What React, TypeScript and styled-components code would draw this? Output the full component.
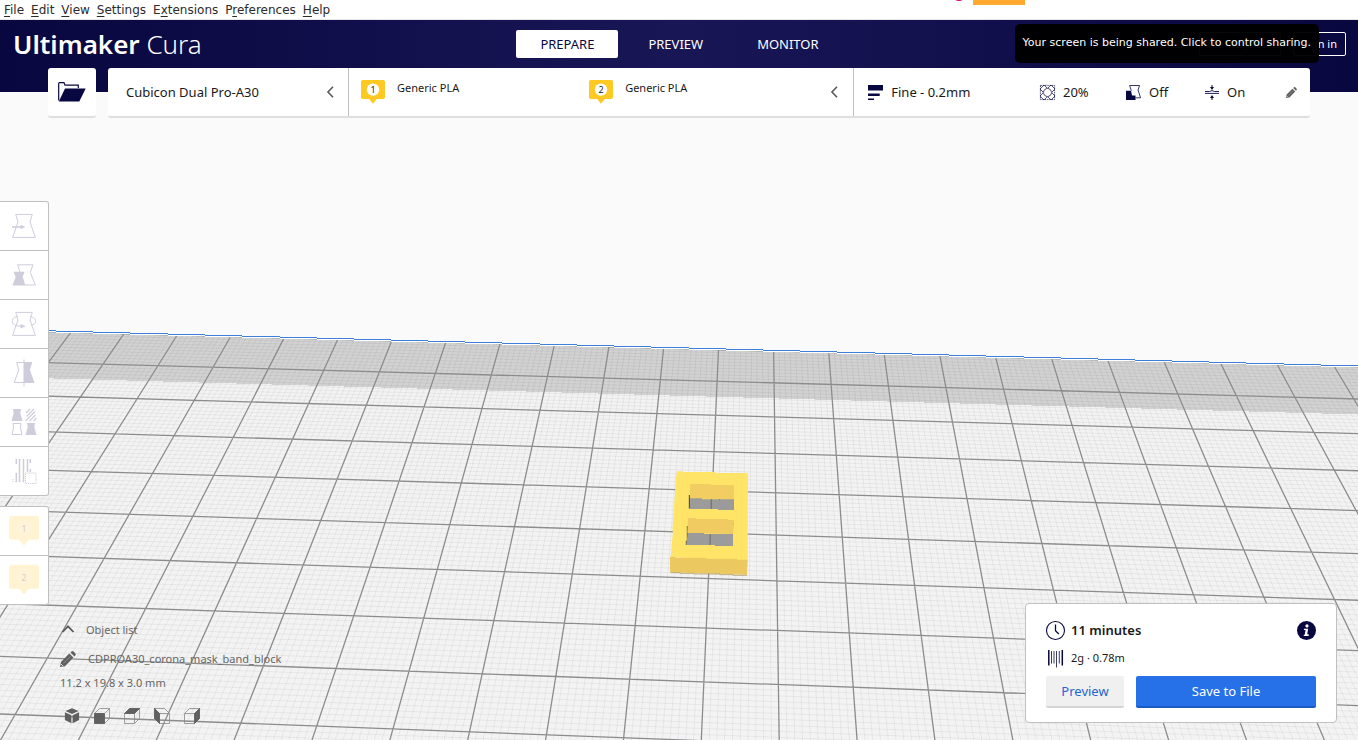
import React from "react";
import styled, { createGlobalStyle } from "styled-components";

const NAVY = "#08073f";

const GlobalStyle = createGlobalStyle`
  *, *::before, *::after { box-sizing: border-box; }
  body {
    margin: 0;
    background: #fafafa;
    color: #191919;
    font-family: "Noto Sans", "Open Sans", sans-serif;
    font-size: 13px;
    line-height: 18px;
  }
  button { font: inherit; color: inherit; border: 0; padding: 0; background: none; cursor: pointer; }
  h1, p { margin: 0; font: inherit; }
  svg { display: block; flex: none; overflow: visible; }
`;

/* ---------- page frame ---------- */

const Window = styled.div`
  position: relative;
  display: grid;
  grid-template: minmax(100vh, auto) / minmax(0, 1fr);
  overflow: hidden;
`;

const SceneSvg = styled.svg`
  grid-area: 1 / 1;
  width: 100%;
  height: 100%;
  overflow: hidden;
`;

const Interface = styled.div`
  grid-area: 1 / 1;
  z-index: 1;
  display: flex;
  flex-direction: column;
`;

const MenuBar = styled.nav`
  display: flex;
  height: 20px;
  padding: 1px 4px 0;
  gap: 7px;
  background: #fff;
  border-bottom: 1px solid #e4e8ec;
  color: #2b2b2b;
  font: 12px/18px "DejaVu Sans", sans-serif;
`;

const MenuButton = styled.button`
  u { text-underline-offset: 2px; }
`;

const Header = styled.header`
  display: grid;
  grid-template-columns: 1fr auto 1fr;
  align-items: center;
  height: 72px;
  padding: 0 12px 24px 13px;
  background: linear-gradient(90deg, ${NAVY}, #191656 50%, ${NAVY});
  color: #fff;
`;

const Brand = styled.h1`
  font-size: 26px;
  line-height: 32px;
  font-weight: 300;
  b { font-weight: 600; }
`;

const Stages = styled.nav`
  display: flex;
  gap: 6px;
`;

const StageTab = styled.button<{ $active?: boolean }>`
  height: 28px;
  padding: 0 24px;
  border-radius: 2px;
  background: ${(p) => (p.$active ? "#fff" : "transparent")};
  color: ${(p) => (p.$active ? NAVY : "#fff")};
`;

const Account = styled.div`
  display: flex;
  justify-content: flex-end;
  gap: 12px;
`;

const OutlineButton = styled.button`
  height: 24px;
  padding: 0 8px;
  border: 1px solid #fff;
  border-radius: 2px;
  font-size: 11px;
`;

/* ---------- toolbar ---------- */

const Toolbar = styled.section`
  display: flex;
  gap: 12px;
  margin: -24px 48px 0;
`;

const OpenButton = styled.button`
  display: grid;
  place-items: center;
  width: 48px;
  height: 50px;
  background: #fff;
  border-bottom: 2px solid #dedede;
  border-radius: 3px;
`;

const Selectors = styled.div`
  flex: 1;
  display: flex;
  height: 50px;
  background: #fff;
  border-bottom: 2px solid #dedede;
  border-radius: 3px;
`;

const MachineButton = styled.button`
  flex: 0 0 240px;
  display: flex;
  align-items: center;
  justify-content: space-between;
  padding: 0 14px 0 18px;
`;

const MaterialButton = styled.button`
  flex: 507;
  display: grid;
  grid-template-columns: 1fr 1fr 36px;
  align-items: center;
  justify-items: start;
  padding: 0 0 0 12px;
  border-left: 1px solid #c0c0c0;
  > svg { margin-left: 14px; }
`;

const Material = styled.span`
  display: flex;
  align-items: center;
  gap: 12px;
  font-size: 11px;
  height: 24px;
`;

const MaterialName = styled.span`
  padding-bottom: 8px;
`;

const SettingsButton = styled.button`
  flex: 455;
  display: grid;
  grid-template-columns: 1fr 86px 79px 81px 24px;
  align-items: center;
  padding-left: 14px;
  border-left: 1px solid #c0c0c0;
`;

const Setting = styled.span`
  display: flex;
  align-items: center;
  gap: 8px;
`;

/* ---------- workspace ---------- */

const Workspace = styled.main`
  flex: 1;
  display: flex;
  justify-content: space-between;
  align-items: stretch;
  gap: 24px;
  padding: 83px 21px 14px 0;
`;

const LeftColumn = styled.div`
  display: flex;
  flex-direction: column;
  justify-content: space-between;
  gap: 14px;
`;

const ToolStack = styled.div`
  display: flex;
  flex-direction: column;
  gap: 10px;
`;

const ToolGroup = styled.div`
  width: 49px;
  background: #fff;
  border: 1px solid #c0c0c0;
  border-left: 0;
  border-radius: 0 3px 3px 0;
`;

const ToolButton = styled.button`
  display: grid;
  place-items: center;
  width: 48px;
  height: 48px;
  & + & { height: 49px; border-top: 1px solid #c0c0c0; }
`;

const ObjectInfo = styled.section`
  padding-left: 60px;
  color: #666;
  font-size: 11px;
  line-height: 18px;
`;

const ObjectToggle = styled.button`
  display: flex;
  align-items: center;
  gap: 10px;
`;

const ObjectRow = styled.button`
  display: flex;
  align-items: center;
  gap: 12px;
  margin: 11px 0 6px;
`;

const ViewButtons = styled.div`
  display: flex;
  gap: 14px;
  padding: 14px 4px 0;
  button { height: 20px; }
`;

const ActionPanel = styled.aside`
  align-self: flex-end;
  width: 312px;
  margin-bottom: 3px;
  padding: 16px 20px 14px;
  background: #fff;
  border: 1px solid #c0c0c0;
  border-radius: 4px;
`;

const PanelRow = styled.div`
  display: flex;
  align-items: center;
  gap: 6px;
  height: 20px;
  margin-bottom: 8px;
  font-size: 11px;
`;

const PrintTime = styled.strong`
  flex: 1;
  font-size: 13px;
  font-weight: 600;
`;

const Actions = styled.div`
  display: flex;
  gap: 12px;
`;

const ActionButton = styled.button<{ $primary?: boolean }>`
  flex: ${(p) => (p.$primary ? "1" : "0 0 78px")};
  height: 32px;
  border-radius: 2px;
  background: ${(p) => (p.$primary ? "#2671e7" : "#f0f0f0")};
  border-bottom: 2px solid ${(p) => (p.$primary ? "#1b5bc4" : "#d4d4d4")};
  color: ${(p) => (p.$primary ? "#fff" : "#1f66d0")};
`;

/* ---------- desktop overlays ---------- */

const ShareTip = styled.div`
  position: absolute;
  z-index: 2;
  top: 24px;
  right: 39px;
  padding: 10px 8px 11px;
  border-radius: 5px;
  background: rgba(0, 0, 0, 0.97);
  color: #fff;
  font: 11px/18px "DejaVu Sans", sans-serif;
`;

const ShareTab = styled.div`
  position: absolute;
  z-index: 2;
  top: 0;
  right: 333px;
  width: 52px;
  height: 5px;
  background: #ffa931;
`;

const RecordDot = styled.div`
  position: absolute;
  z-index: 2;
  top: -13px;
  right: 392px;
  width: 14px;
  height: 14px;
  border-radius: 50%;
  background: #e5006d;
`;

/* ---------- build plate ---------- */

// Perspective projection of plate coordinates (column u, row v) to the view.
const project = (u: number, v: number): [number, number] => {
  const w = 1 - 0.00155 * u - 0.032 * v;
  return [(52.846 * u - 24.32 * v + 71) / w, (0.9015 * u + 18.95 * v + 332.2) / w];
};

const segment = (u1: number, v1: number, u2: number, v2: number) => {
  const [x1, y1] = project(u1, v1);
  const [x2, y2] = project(u2, v2);
  return `M${x1.toFixed(1)} ${y1.toFixed(1)}L${x2.toFixed(1)} ${y2.toFixed(1)}`;
};

const gridPath = (step: number, skip: number) => {
  let d = "";
  for (let i = -4 * step; i <= 26 * step; i++) if (!skip || i % skip) d += segment(i / step, 0, i / step, 14);
  for (let i = 0; i <= 14 * step; i++) if (!skip || i % skip) d += segment(-4, i / step, 26, i / step);
  return d;
};

const MAJOR = gridPath(1, 0);
const MINOR = gridPath(10, 10);

const Scene = () => (
  <SceneSvg viewBox="0 0 1358 740" preserveAspectRatio="xMidYMid slice" aria-hidden="true">
    <path d="M0 330L1358 367V740H0Z" fill="#f3f3f3" shapeRendering="crispEdges" />
    <path d="M0 330L1358 367V414.500L0 377Z" fill="#d2d2d2" shapeRendering="crispEdges" />
    <path d={MINOR} stroke="#000" strokeOpacity="0.05" fill="none" />
    <path d={MAJOR} stroke="#8c8c8f" strokeWidth="1.300" fill="none" />
    <path d="M0 330.500L1358 367" stroke="#fff" fill="none" shapeRendering="crispEdges" />
    <path d="M0 329.500L1358 366" stroke="#3f7fdc" fill="none" shapeRendering="crispEdges" />
    <g transform="translate(640 440) scale(0.333333)">
      <path d="M111 94H129V96H227V99H324L323 362L92 352L99 272H97L108 114Z" fill="#ffe468" />
      <path d="M90 350H106V353H198V356H291V359H323L321 404L90 397Z" fill="#ebc960" />
      <path d="M92 398H120V400H161V402H240V404H279V406H321" fill="none" stroke="#a88f50" strokeWidth="2" />
      <path d="M150 132H213V135H282V179L150 175Z" fill="#f1cd62" />
      <path d="M148 175H186V178H282V210H234V207H148Z" fill="#9b9b9b" />
      <path d="M148 165V205M142 258V299M139 302V315M279 253H282" stroke="#44412e" strokeWidth="3" fill="none" />
      <path d="M144 234H168V237H264V240H282V246L279 282L142 279Z" fill="#efcb61" />
      <path d="M143 279H192V282H279V318H225V315H139Z" fill="#9b9b9b" />
      <path d="M214 178V207M211 282L210 315" stroke="#77777a" strokeWidth="4" />
      <path d="M237 179H240" stroke="#c0392b" strokeWidth="2" />
    </g>
  </SceneSvg>
);

/* ---------- icons ---------- */

const FolderIcon = () => (
  <svg width="28" height="20" viewBox="0 0 28 20">
    <path d="M.7 18.500V1.200L1.500.6H6L7 3.200H20.300V6" fill="none" stroke={NAVY} strokeWidth="1.200" />
    <path d="M7 6.500H27.700L21.300 19.500H.8Z" fill={NAVY} />
  </svg>
);

const ChevronIcon = () => (
  <svg width="7" height="12" viewBox="0 0 7 12">
    <path d="M6 .8L1 6l5 5.200" fill="none" stroke="#5a5a5a" strokeWidth="1.600" />
  </svg>
);

const BadgeIcon = ({ n, muted }: { n: number; muted?: boolean }) => {
  const size = muted ? 30 : 24;
  return (
    <svg width={size} height={size} viewBox="0 0 24 24">
      <path d="M1.200 0H22.800L24 1.200V17.800L22.800 19H15.800L12 23.800L8.200 19H1.200L0 17.800V1.200Z" fill={muted ? "#fff3d2" : "#ffc924"} />
      <circle cx="12" cy="9.600" r="6.200" fill={muted ? "#fff4da" : "#fff"} />
      <text x="12" y={muted ? 12.6 : 13} textAnchor="middle" fontSize={muted ? 7 : 9} fill={muted ? "#d8cfb6" : "#191919"}>{n}</text>
    </svg>
  );
};

const LayerIcon = () => (
  <svg width="15" height="15" viewBox="0 0 15 15" fill={NAVY}>
    <path d="M0 0H15V5.400H0ZM0 8.400H11.700V11H0ZM0 13.500H6V15H0Z" />
  </svg>
);

const InfillIcon = () => (
  <svg width="15" height="15" viewBox="0 0 15 15" fill="none" stroke={NAVY} strokeWidth="0.700">
    <rect x=".4" y=".4" width="14.200" height="14.200" strokeDasharray="1.500 .8" />
    <path d="M0 4L4 0M0 11L11 0M4 15L15 4M11 15L15 11M0 4L11 15M4 0L15 11M11 0L15 4M0 11L4 15" />
    <path d="M4.600 4.600L7.500 3.200L10.400 4.600L11.800 7.500L10.400 10.400L7.500 11.800L4.600 10.400L3.200 7.500Z" fill="#fff" />
  </svg>
);

const SupportIcon = () => (
  <svg width="15" height="15" viewBox="0 0 15 15">
    <path d="M0 5.700H5L6 10.500H9.500V15H0Z" fill={NAVY} />
    <path d="M3.600.5H13.600L12 5L14.600 12.800H9.500M3.600.5L5.300 5.700" fill="none" stroke={NAVY} strokeWidth="0.800" />
  </svg>
);

const AdhesionIcon = () => (
  <svg width="14" height="15" viewBox="0 0 14 15">
    <path d="M0 6.500H4.500L7 5.600L9.500 6.500H14M0 8.400H14" fill="none" stroke={NAVY} strokeWidth="0.900" />
    <path d="M7 0V3M7 12V15" stroke={NAVY} />
    <path d="M5 2H9L7 5ZM5 13H9L7 10Z" fill={NAVY} />
  </svg>
);

const PencilIcon = ({ size }: { size: number }) => (
  <svg width={size} height={size} viewBox="0 0 15 15" fill="#606060">
    <path d="M8.700 2.300L12.600 6.200L4.700 14.200L0 15L.9 10.200ZM9.800 1.300L10.800.4Q11.800-.3 12.700.5L14.500 2.300Q15.200 3.200 14.500 4.100L13.600 5.100Z" />
    <path d="M3.300 11.600L10 4.900" stroke="#aaa" strokeWidth="0.600" />
    <path d="M.9 12.200L2.800 14.200" stroke="#eee" strokeWidth="0.900" />
  </svg>
);

const UpIcon = () => (
  <svg width="16" height="12" viewBox="0 0 16 12">
    <path d="M2.500 8L8 2.300L13.500 8" fill="none" stroke="#5a5a5a" strokeWidth="1.800" />
  </svg>
);

const VASE = "M3.700.4H20.300L18 8L23.400 23.400H.6L6 8Z";
const INK = "#cfcddc";

const ToolSvg = ({ children }: { children: React.ReactNode }) => (
  <svg width="24" height="24" viewBox="0 0 24 24" fill="none" stroke={INK}>{children}</svg>
);

const MoveIcon = () => (
  <ToolSvg>
    <path d={VASE} />
    <path d="M0 13H9" strokeWidth="1.500" />
    <path d="M8.500 10.700V15.300L13.500 13Z" fill={INK} stroke="none" />
  </ToolSvg>
);

const ScaleIcon = () => (
  <ToolSvg>
    <path d="M8 9L5.500 1.800H20.900L18.300 9.500L23.400 22H13" />
    <path d="M1.500 8.700H12.500L10.700 14L13.400 22.500H.4L3.700 14Z" fill={INK} stroke="none" />
  </ToolSvg>
);

const RotateIcon = () => (
  <ToolSvg>
    <path d={VASE} />
    <path d="M6 4.800C1.500 4.800.3 7 .3 9.300C.3 12 3 14.200 9 14.200M18 4.800C22 4.800 23.700 7 23.700 9.300S21.500 13 19 13" />
    <path d="M8.500 12V16.500L13.500 14.300Z" fill={INK} stroke="none" />
  </ToolSvg>
);

const MirrorIcon = () => (
  <ToolSvg>
    <path d="M12 1.500H4.700L6.800 9L2.200 21.500H12" />
    <path d="M12 1H20.200L18 9L22.500 22H12Z" fill={INK} stroke="none" />
    <path d="M12-1.500V25.500" />
  </ToolSvg>
);

const MODEL = "M1.500 0H9.500L8.800 4L11 12H0L2.200 4Z";

const PerModelIcon = () => (
  <ToolSvg>
    <path d={MODEL} transform="translate(-.5 -1)" fill={INK} stroke="none" />
    <path d="M14 3L18-1M14.500 6.500L22-1M13.500 11L23 1.500M17.500 11L23.500 5M21.500 11L24.500 8" strokeWidth="1.200" />
    <path d="M1.500.5H9.500L8.800 4L10.500 11.500H.5L2.200 4Z" transform="translate(-.5 13)" />
    <path d={MODEL} transform="translate(13.500 13)" fill={INK} stroke="none" />
  </ToolSvg>
);

const BlockerIcon = () => (
  <ToolSvg>
    <path d="M4.300 0V5M4.300 14V23.300M7.500 0V23.300M11.500 0V23.300M15.500 0V13M18.300 0V4M18.300 10V13" strokeWidth="1.500" />
    <path d="M1 20V23.500" strokeDasharray="1 1" />
    <rect x="13.500" y="14" width="10.500" height="10.500" strokeDasharray="1.200 .8" />
  </ToolSvg>
);

const ClockIcon = () => (
  <svg width="19" height="19" viewBox="0 0 19 19" fill="none" stroke={NAVY}>
    <circle cx="9.500" cy="9.500" r="9" strokeWidth="1.100" />
    <path d="M9.500 3.500V9.800L12.800 13" strokeWidth="1.300" />
  </svg>
);

const SpoolIcon = () => (
  <svg width="19" height="19" viewBox="0 0 19 19" fill="none" stroke={NAVY}>
    <path d="M2.800 1V16.500M16.300 1V16.500" strokeWidth="1.500" />
    <path d="M5.500 2V14.500M8 2V14.500M10.500 2V18.500M13.300 2V14.500" strokeWidth="0.800" />
  </svg>
);

const InfoIcon = () => (
  <svg width="19" height="19" viewBox="0 0 19 19">
    <circle cx="9.500" cy="9.500" r="9.500" fill={NAVY} />
    <circle cx="10" cy="4.900" r="1.600" fill="#fff" />
    <path d="M6.900 7.700H11.200L10.200 13.300H11.700V14.900H6.800V13.700H7.700L8.500 9H6.900Z" fill="#fff" />
  </svg>
);

const CubeIcon = ({ view }: { view: string }) => {
  if (view === "3D view")
    return (
      <svg width="16" height="16" viewBox="0 0 16 16" fill="#606060">
        <path d="M8 .3L14.500 3L8 6L1.500 3ZM.9 4.300L7.400 7.200V15.300L.9 12ZM15.100 4.300L8.600 7.200V15.300L15.100 12Z" />
      </svg>
    );
  const flip = view === "Left view";
  const faces: Record<string, string> = {
    "Front view": "M.5 5.500H10.500V15.500H.5Z",
    "Top view": "M.5 5.500L5.500.5H15.500L10.500 5.500Z",
    "Left view": "M10.500 5.500L15.500.5V10.500L10.500 15.500Z",
    "Right view": "M10.500 5.500L15.500.5V10.500L10.500 15.500Z",
  };
  return (
    <svg width="16" height="16" viewBox="0 0 16 16" fill="none" stroke="#888" strokeWidth="0.800">
      <g transform={flip ? "matrix(-1 0 0 1 16 0)" : undefined}>
        <path d="M.5 5.500H10.500V15.500H.5ZM.5 5.500L5.500.5H15.500V10.500L10.500 15.500M10.500 5.500L15.500.5" />
        <path d={faces[view]} fill="#606060" stroke="#606060" />
      </g>
    </svg>
  );
};

/* ---------- data ---------- */

const menus: [string, string, string][] = [
  ["", "F", "ile"],
  ["", "E", "dit"],
  ["", "V", "iew"],
  ["", "S", "ettings"],
  ["E", "x", "tensions"],
  ["P", "r", "eferences"],
  ["", "H", "elp"],
];

const tools: [string, React.ComponentType][] = [
  ["Move", MoveIcon],
  ["Scale", ScaleIcon],
  ["Rotate", RotateIcon],
  ["Mirror", MirrorIcon],
  ["Per model settings", PerModelIcon],
  ["Support blocker", BlockerIcon],
];

const views = ["3D view", "Front view", "Top view", "Left view", "Right view"];

export default function App() {
  return (
    <Window>
      <GlobalStyle />
      <Scene />
      <Interface>
        <MenuBar>
          {menus.map(([before, key, after]) => (
            <MenuButton key={before + key + after}>{before}<u>{key}</u>{after}</MenuButton>
          ))}
        </MenuBar>

        <Header>
          <Brand><b>Ultimaker</b> Cura</Brand>
          <Stages>
            <StageTab $active>PREPARE</StageTab>
            <StageTab>PREVIEW</StageTab>
            <StageTab>MONITOR</StageTab>
          </Stages>
          <Account>
            <OutlineButton>Marketplace</OutlineButton>
            <OutlineButton>Sign in</OutlineButton>
          </Account>
        </Header>

        <Toolbar>
          <OpenButton aria-label="Open file"><FolderIcon /></OpenButton>
          <Selectors>
            <MachineButton>Cubicon Dual Pro-A30<ChevronIcon /></MachineButton>
            <MaterialButton>
              {[1, 2].map((n) => (
                <Material key={n}><BadgeIcon n={n} /><MaterialName>Generic PLA</MaterialName></Material>
              ))}
              <ChevronIcon />
            </MaterialButton>
            <SettingsButton>
              <Setting><LayerIcon />Fine - 0.2mm</Setting>
              <Setting><InfillIcon />20%</Setting>
              <Setting><SupportIcon />Off</Setting>
              <Setting><AdhesionIcon />On</Setting>
              <PencilIcon size={11} />
            </SettingsButton>
          </Selectors>
        </Toolbar>

        <Workspace>
          <LeftColumn>
            <ToolStack>
              <ToolGroup>
                {tools.map(([label, Icon]) => (
                  <ToolButton key={label} aria-label={label}><Icon /></ToolButton>
                ))}
              </ToolGroup>
              <ToolGroup>
                {[1, 2].map((n) => (
                  <ToolButton key={n} aria-label={`Extruder ${n}`}><BadgeIcon n={n} muted /></ToolButton>
                ))}
              </ToolGroup>
            </ToolStack>
            <ObjectInfo>
              <ObjectToggle><UpIcon />Object list</ObjectToggle>
              <ObjectRow><PencilIcon size={16} />CDPROA30_corona_mask_band_block</ObjectRow>
              <p>11.2 x 19.8 x 3.0 mm</p>
              <ViewButtons>
                {views.map((view) => (
                  <button key={view} aria-label={view}><CubeIcon view={view} /></button>
                ))}
              </ViewButtons>
            </ObjectInfo>
          </LeftColumn>

          <ActionPanel>
            <PanelRow><ClockIcon /><PrintTime>11 minutes</PrintTime><InfoIcon /></PanelRow>
            <PanelRow><SpoolIcon />2g · 0.78m</PanelRow>
            <Actions>
              <ActionButton>Preview</ActionButton>
              <ActionButton $primary>Save to File</ActionButton>
            </Actions>
          </ActionPanel>
        </Workspace>
      </Interface>
      <RecordDot />
      <ShareTab />
      <ShareTip role="tooltip">Your screen is being shared. Click to control sharing.</ShareTip>
    </Window>
  );
}
